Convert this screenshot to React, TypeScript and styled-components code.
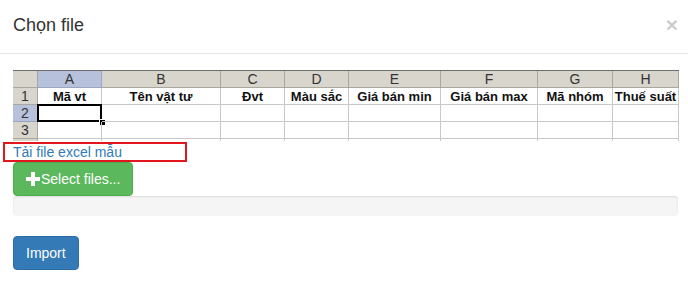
import React from "react"
import styled, { createGlobalStyle } from "styled-components"

const GlobalStyle = createGlobalStyle`
  html, body {
    margin: 0;
    padding: 0;
    background: #fff;
  }
  body {
    font-family: "Liberation Sans", Arial, Helvetica, sans-serif;
    font-size: 14px;
    color: #333;
  }
`

const columns = [
  { key: "A", width: 64, title: "Mã vt" },
  { key: "B", width: 119, title: "Tên vật tư" },
  { key: "C", width: 64, title: "Đvt" },
  { key: "D", width: 64, title: "Màu sắc" },
  { key: "E", width: 92, title: "Giá bán min" },
  { key: "F", width: 97, title: "Giá bán max" },
  { key: "G", width: 75, title: "Mã nhóm" },
  { key: "H", width: 66, title: "Thuế suất" },
]

const Modal = styled.div`
  width: 688px;
  height: 281px;
  background: #fff;
  overflow: hidden;
`

const Header = styled.div`
  display: flex;
  justify-content: space-between;
  align-items: flex-start;
  padding: 12px 10px 15px 13px;
  border-bottom: 1px solid #e5e5e5;
`

const Title = styled.h4`
  margin: 0;
  font-size: 18px;
  line-height: 26px;
  font-weight: normal;
  color: #333;
`

const Close = styled.button`
  border: 0;
  background: none;
  padding: 0;
  margin-top: 2px;
  font-family: "Liberation Sans", Arial, sans-serif;
  font-size: 21px;
  font-weight: bold;
  line-height: 21px;
  color: #000;
  opacity: 0.2;
  cursor: pointer;
`

const Body = styled.div`
  display: flex;
  flex-direction: column;
  align-items: flex-start;
  padding: 16px 10px 15px 13px;
`

const Sheet = styled.div`
  display: grid;
  grid-template-columns: 25px ${columns.map(c => `${c.width}px`).join(" ")};
  grid-template-rows: 17px 17px 17px 17px 2px;
  border-top: 1px solid #6d6d6d;
  font-family: "Liberation Sans", Arial, sans-serif;
  font-size: 13px;
  color: #111;
  margin-bottom: 1px;
`

const HeadCell = styled.div<{ $active?: boolean }>`
  box-sizing: border-box;
  display: flex;
  align-items: center;
  justify-content: center;
  background: ${p => (p.$active ? "#b7c1db" : "#d8d5cd")};
  border-right: 1px solid ${p => (p.$active ? "#9aa5c4" : "#aaa79f")};
  border-bottom: 1px solid ${p => (p.$active ? "#9aa5c4" : "#aaa79f")};
  color: #333;
  font-size: 14px;
  line-height: 1;
  overflow: hidden;
`

const Cell = styled.div<{ $bold?: boolean; $selected?: boolean }>`
  position: relative;
  box-sizing: border-box;
  display: flex;
  align-items: center;
  justify-content: center;
  border-right: 1px solid #c8c8c8;
  border-bottom: 1px solid #c8c8c8;
  font-weight: ${p => (p.$bold ? "bold" : "normal")};
  white-space: nowrap;
  overflow: ${p => (p.$selected ? "visible" : "hidden")};
  ${p =>
    p.$selected &&
    `
    border: 2px solid #000;
    margin: -1px 0 0 -1px;
    &::after {
      content: "";
      position: absolute;
      right: -5px;
      bottom: -5px;
      width: 5px;
      height: 5px;
      background: #000;
      border-top: 1px solid #fff;
      border-left: 1px solid #fff;
    }
  `}
`

const StubCell = styled.div<{ $head?: boolean }>`
  box-sizing: border-box;
  background: ${p => (p.$head ? "#d8d5cd" : "#fff")};
  border-right: 1px solid ${p => (p.$head ? "#aaa79f" : "#c8c8c8")};
`

const SampleLink = styled.a`
  box-sizing: border-box;
  display: inline-block;
  width: 184px;
  margin-left: -10px;
  padding-left: 8px;
  border: 2px solid #e3151f;
  line-height: 16px;
  font-size: 14px;
  color: #337ab7;
  text-decoration: none;
`

const Button = styled.button<{ $variant: "success" | "primary" }>`
  display: inline-flex;
  align-items: center;
  box-sizing: border-box;
  height: 34px;
  padding: 6px 12px;
  border-radius: 4px;
  border: 1px solid ${p => (p.$variant === "success" ? "#4cae4c" : "#2e6da4")};
  background: ${p => (p.$variant === "success" ? "#5cb85c" : "#337ab7")};
  color: #fff;
  font-family: "Liberation Sans", Arial, sans-serif;
  font-size: 14px;
  line-height: 20px;
  cursor: pointer;
`

const SelectButton = styled(Button)`
  width: 120px;
  padding-right: 0;
`

const Progress = styled.div`
  align-self: stretch;
  height: 20px;
  margin-bottom: 20px;
  border-radius: 4px;
  background: #f5f5f5;
  box-shadow: inset 0 1px 2px rgba(0, 0, 0, 0.1);
`

const PlusIcon = () => (
  <svg width="14" height="14" viewBox="0 0 14 14" style={{ marginRight: 1 }}>
    <path d="M5 0h4v5h5v4H9v5H5V9H0V5h5z" fill="#fff" />
  </svg>
)

export default function App() {
  return (
    <Modal>
      <GlobalStyle />
      <Header>
        <Title>Chọn file</Title>
        <Close aria-label="Close">×</Close>
      </Header>
      <Body>
        <Sheet>
          <HeadCell />
          {columns.map(c => (
            <HeadCell key={c.key} $active={c.key === "A"}>
              {c.key}
            </HeadCell>
          ))}
          <HeadCell>1</HeadCell>
          {columns.map(c => (
            <Cell key={c.key} $bold>
              {c.title}
            </Cell>
          ))}
          <HeadCell $active>2</HeadCell>
          {columns.map(c => (
            <Cell key={c.key} $selected={c.key === "A"} />
          ))}
          <HeadCell>3</HeadCell>
          {columns.map(c => (
            <Cell key={c.key} />
          ))}
          <StubCell $head />
          {columns.map(c => (
            <StubCell key={c.key} />
          ))}
        </Sheet>
        <SampleLink href="#">Tải file excel mẫu</SampleLink>
        <SelectButton $variant="success">
          <PlusIcon />
          Select files...
        </SelectButton>
        <Progress />
        <Button $variant="primary">Import</Button>
      </Body>
    </Modal>
  )
}
